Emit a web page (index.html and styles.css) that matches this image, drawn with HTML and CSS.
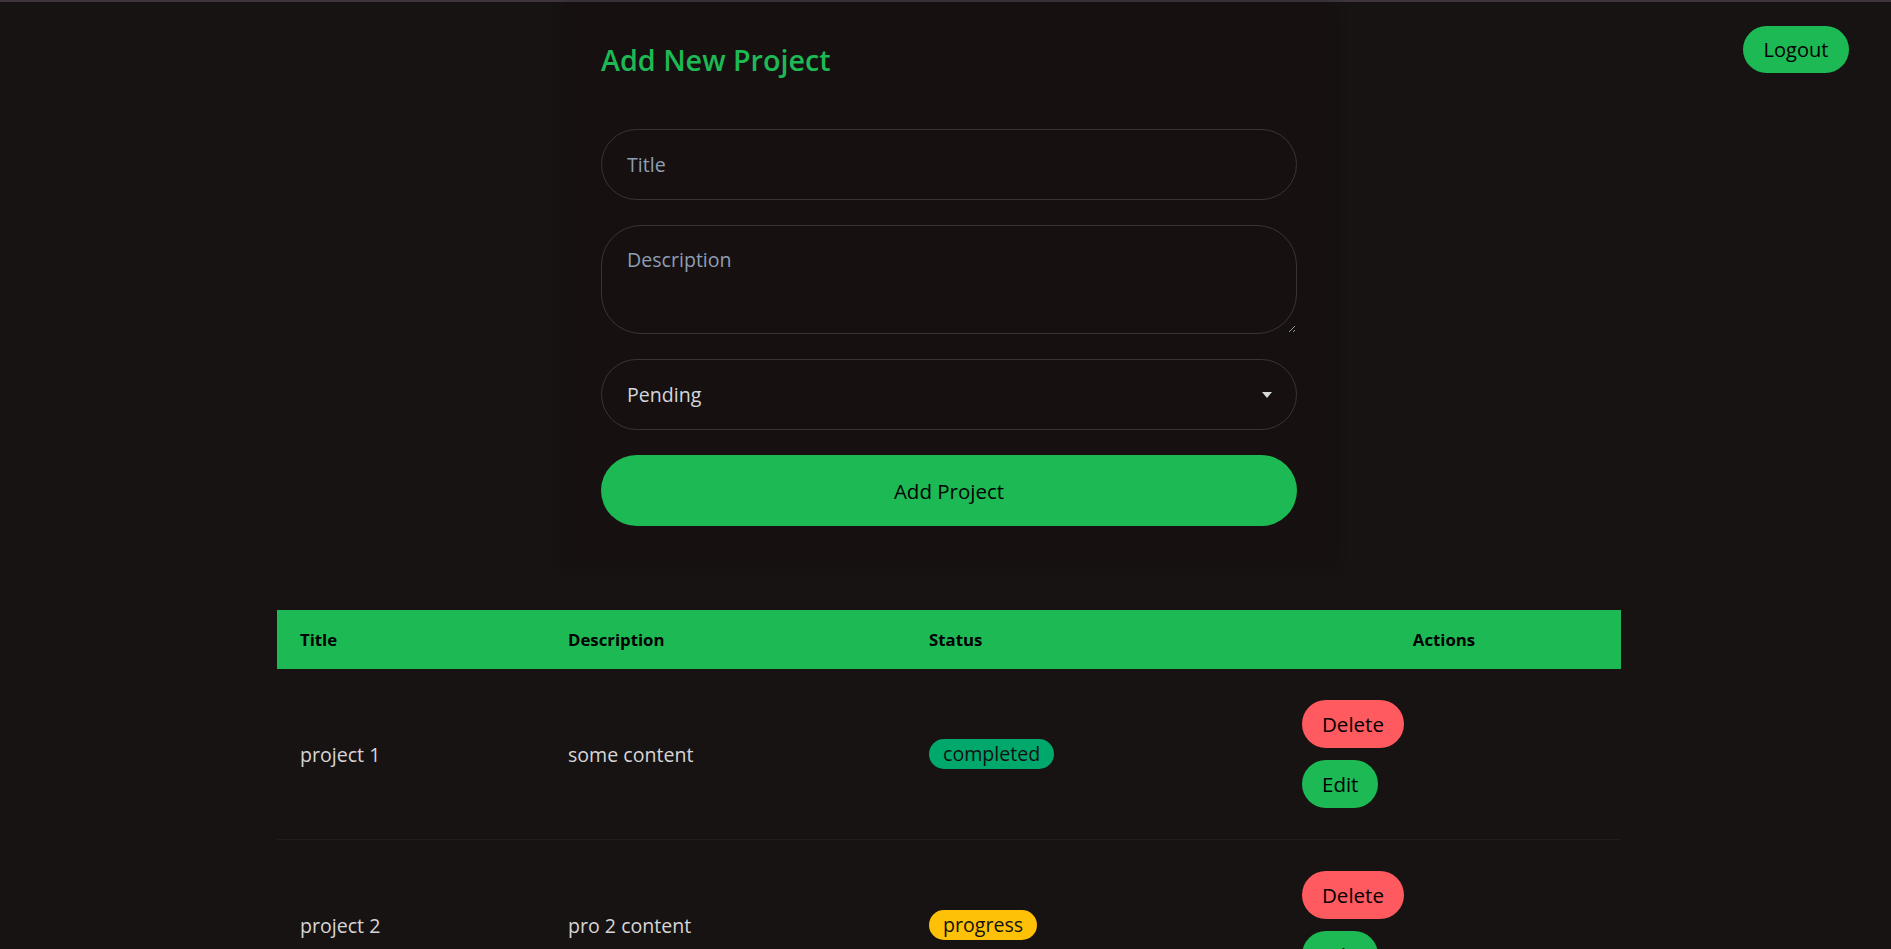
FILE: index.html
```html
<!DOCTYPE html>
<html lang="en">
<head>
<meta charset="utf-8">
<title>Projects</title>
<link rel="stylesheet" href="styles.css">
</head>
<body>
<div class="topline"></div>
<button class="logout">Logout</button>
<main class="page">
  <section class="card">
    <h2 class="card-title">Add New Project</h2>
    <form class="form">
      <input class="field" type="text" placeholder="Title">
      <textarea class="field area" placeholder="Description"></textarea>
      <div class="select-wrap">
        <select class="field select">
          <option>Pending</option>
          <option>Progress</option>
          <option>Completed</option>
        </select>
      </div>
      <button type="button" class="submit">Add Project</button>
    </form>
  </section>

  <table class="projects">
    <colgroup>
      <col class="c1"><col class="c2"><col class="c3"><col class="c4">
    </colgroup>
    <thead>
      <tr>
        <th>Title</th>
        <th>Description</th>
        <th>Status</th>
        <th class="th-actions">Actions</th>
      </tr>
    </thead>
    <tbody>
      <tr>
        <td>project 1</td>
        <td>some content</td>
        <td><span class="badge badge-completed">completed</span></td>
        <td>
          <div class="actions">
            <button class="btn btn-delete">Delete</button>
            <button class="btn btn-edit">Edit</button>
          </div>
        </td>
      </tr>
      <tr>
        <td>project 2</td>
        <td>pro 2 content</td>
        <td><span class="badge badge-progress">progress</span></td>
        <td>
          <div class="actions">
            <button class="btn btn-delete">Delete</button>
            <button class="btn btn-edit">Edit</button>
          </div>
        </td>
      </tr>
    </tbody>
  </table>
</main>
</body>
</html>
```

FILE: styles.css
```css
* { box-sizing: border-box; }

html, body {
  margin: 0;
  padding: 0;
  background: #171312;
  font-family: "Open Sans", "Noto Sans", sans-serif;
  color: #d8d8d8;
}

.topline {
  height: 2px;
  background: #3d3539;
}

.logout {
  position: absolute;
  top: 26px;
  right: 42px;
  width: 106px;
  height: 47px;
  border: none;
  border-radius: 24px;
  background: #1db954;
  color: #000;
  font-family: inherit;
  font-size: 20px;
  cursor: pointer;
}

.page {
  display: flex;
  flex-direction: column;
  align-items: center;
  padding-left: 7px;
}

.card {
  width: 772px;
  padding: 31px 38px 37px 38px;
  background: #161110;
  box-shadow: 0 2px 12px rgba(0, 0, 0, 0.25);
  border-radius: 6px;
}

.card-title {
  margin: 0 0 42px 0;
  color: #1db954;
  font-size: 28.7px;
  font-weight: 600;
  line-height: 54px;
}

.form {
  display: flex;
  flex-direction: column;
  gap: 25px;
}

.field {
  width: 100%;
  height: 71px;
  padding: 0 25px;
  border: 1px solid #3a3434;
  border-radius: 36px;
  background: transparent;
  color: #d3d6dc;
  font-family: inherit;
  font-size: 19.6px;
  outline: none;
}

.field::placeholder {
  color: #8e9db3;
}

.area {
  height: 109px;
  padding: 20px 25px;
  resize: vertical;
  border-radius: 40px;
}

.select-wrap {
  position: relative;
}

.select {
  appearance: none;
  -webkit-appearance: none;
}

.select-wrap::after {
  content: "";
  position: absolute;
  right: 25px;
  top: 33px;
  border-left: 5.5px solid transparent;
  border-right: 5.5px solid transparent;
  border-top: 6px solid #d8d8d8;
  pointer-events: none;
}

.submit {
  height: 71px;
  border: none;
  border-radius: 36px;
  background: #1db954;
  color: #000;
  font-family: inherit;
  font-size: 20.5px;
  cursor: pointer;
}

.projects {
  margin-top: 47px;
  width: 1344px;
  table-layout: fixed;
  border-collapse: collapse;
}

.c1 { width: 268px; }
.c2 { width: 361px; }
.c3 { width: 373px; }
.c4 { width: 342px; }

.projects th {
  height: 59px;
  padding: 0 23px;
  background: #1db954;
  color: #000;
  text-align: left;
  font-size: 16.8px;
  font-weight: 700;
}

.projects th.th-actions {
  text-align: center;
  padding-right: 35px;
}

.projects td {
  padding: 31px 23px;
  border-bottom: 1px solid #221d1c;
  font-size: 19.6px;
  color: #d6d6d6;
  vertical-align: middle;
}

.badge {
  display: inline-block;
  padding: 2px 14px;
  border-radius: 15px;
  color: #111;
  font-size: 19.6px;
  line-height: 26px;
}

.badge-completed { background: #00a86b; }
.badge-progress { background: #ffc107; }

.actions {
  display: flex;
  flex-direction: column;
  align-items: flex-start;
  gap: 12px;
}

.btn {
  height: 48px;
  padding: 0 20px;
  border: none;
  border-radius: 24px;
  color: #000;
  font-family: inherit;
  font-size: 20.5px;
  cursor: pointer;
}

.btn-delete { background: #ff5a5f; }
.btn-edit { background: #1db954; }
```
